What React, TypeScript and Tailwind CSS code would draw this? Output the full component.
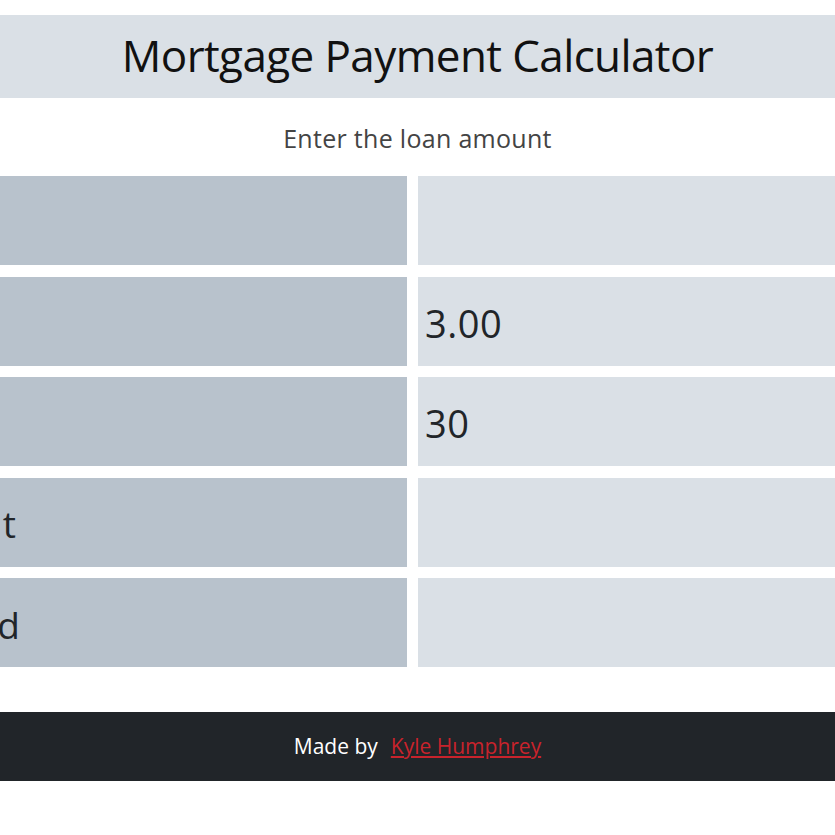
import React from "react";

const rows = [
    { label: "Loan Amount", value: "", pr: "pr-[440px]", input: true },
    { label: "Interest Rate", value: "3.00", pr: "pr-[440px]", input: true },
    { label: "Loan Term", value: "30", pr: "pr-[440px]", input: true },
    { label: "Monthly Payment", value: "", pr: "pr-[388px]", input: false },
    { label: "Total Paid", value: "", pr: "pr-[384px]", input: false },
];

export default function App() {
    return (
        <div className="w-[835px] min-h-screen overflow-hidden bg-white pt-[15px] font-['Open_Sans',sans-serif] text-[#212529]">
            {/* Header */}
            <div className="flex h-[83px] items-center justify-center bg-[#dae0e6] pb-[4px]">
                <h1 className="text-[44px] leading-none tracking-[-0.6px] text-[#111]">Mortgage Payment Calculator</h1>
            </div>

            <p className="flex h-[78px] items-center justify-center pt-[4px] text-[25px] tracking-[0.3px] text-[#444]">
                Enter the loan amount
            </p>

            {/* Rows */}
            <div className="ml-[-193px] grid w-[1211px] grid-cols-2 gap-x-[11px] gap-y-[11.5px]">
                {rows.map((row) => (
                    <React.Fragment key={row.label}>
                        <div className={`flex h-[89px] items-center justify-end bg-[#b8c2cc] pt-[4px] text-[37px] ${row.pr}`}>
                            <span className="whitespace-nowrap tracking-[3px]">{row.label}</span>
                        </div>
                        <div className="flex h-[89px] items-center bg-[#dae0e6] px-[7px] pt-[4px]">
                            {row.input ? (
                                <input
                                    className="w-full bg-transparent text-[38px] tracking-[0.5px] text-[#212529] outline-none"
                                    defaultValue={row.value}
                                    readOnly
                                />
                            ) : (
                                <span className="text-[38px]">{row.value}</span>
                            )}
                        </div>
                    </React.Fragment>
                ))}
            </div>

            {/* Footer */}
            <div className="mt-[45px] flex h-[69px] items-center justify-center bg-[#212529] text-[21px]">
                <span className="text-white">Made by</span>
                <a href="#" className="ml-[13px] text-[#c8232c] underline">Kyle Humphrey</a>
            </div>
        </div>
    );
}
